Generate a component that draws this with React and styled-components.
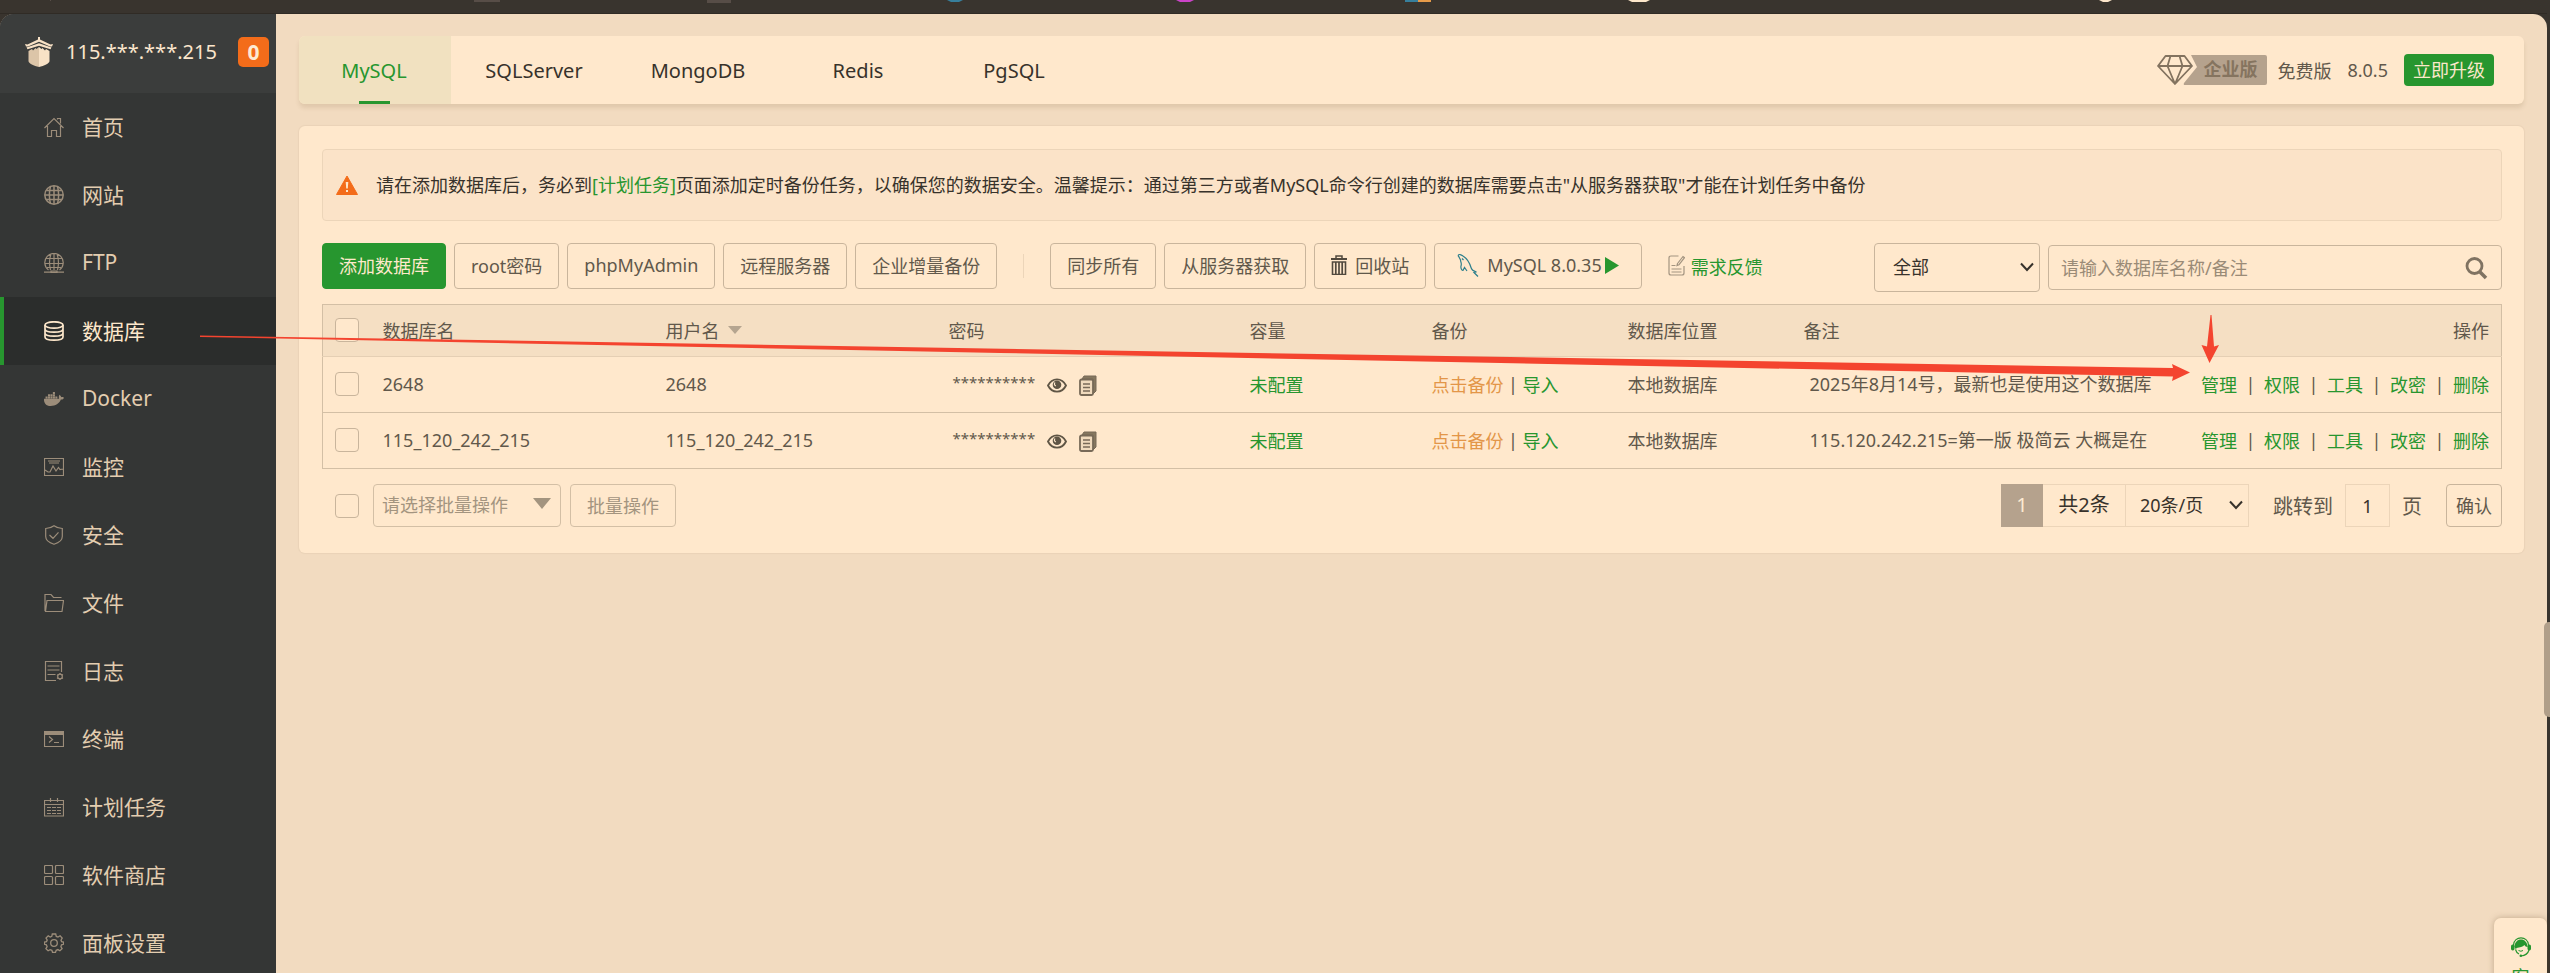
import React from "react";
import styled, { createGlobalStyle, css } from "styled-components";
import { FaDocker } from "react-icons/fa";

const c = {
  frame: "#39342e",
  page: "#f2dbc0",
  card: "#ffe8cc",
  line: "#d3bfa5",
  softLine: "#ecd5b9",
  control: "#c9b59c",
  text: "#61584b",
  ink: "#37322b",
  muted: "#a3947f",
  green: "#27962f",
  orange: "#e39648",
  alert: "#f36c1a",
  red: "#f4442f",
};

const Global = createGlobalStyle`
  *, *::before, *::after { box-sizing: border-box; }
  html, body { margin: 0; height: 100%; overflow: hidden; background: ${c.frame}; }
  body, button, input, select {
    font-family: "Noto Sans", "Noto Sans CJK SC", sans-serif;
    font-size: 18px;
    color: ${c.text};
  }
  a { text-decoration: none; color: ${c.green}; }
  svg { display: block; flex: none; }
`;

/* ---------- shell ---------- */
const Shell = styled.div`
  position: relative;
  display: flex;
  flex-direction: column;
  height: 100vh;
  padding-right: 3px;
  overflow: hidden;
`;
const TopStrip = styled.div`
  flex: none;
  height: 14px;
  border-bottom: 1px solid #302b25;
`;
const Body = styled.div`
  flex: 1;
  min-height: 0;
  display: flex;
  border-radius: 14px 14px 0 0;
  overflow: hidden;
  background: ${c.page};
`;
const Sidebar = styled.aside`
  flex: none;
  width: 276px;
  background: #343635;
  overflow: hidden;
`;
const SideHead = styled.div`
  height: 79px;
  padding: 0 7px 4px 25px;
  display: flex;
  align-items: center;
  gap: 13px;
  background: #3b3d3c;
  color: #fbe6cc;
  font-size: 20px;
`;
const Count = styled.span`
  margin-left: auto;
  width: 31px;
  height: 30px;
  border-radius: 5px;
  background: ${c.alert};
  color: #fdead2;
  font-size: 21px;
  font-weight: 700;
  line-height: 30px;
  text-align: center;
`;
const NavItem = styled.a`
  display: flex;
  align-items: center;
  gap: 18px;
  height: 68px;
  padding-left: 40px;
  border-left: 4px solid ${(p) => (p.$active ? c.green : "transparent")};
  background: ${(p) => (p.$active ? "#2b2d2c" : "transparent")};
  color: ${(p) => (p.$active ? "#fde7cb" : "#e3cdb0")};
  font-size: 21px;
  span { padding-bottom: 3px; }
  svg { color: ${(p) => (p.$active ? "#fde7cb" : "#9c8d7a")}; }
`;
const Main = styled.main`
  flex: 1;
  min-width: 0;
  display: flex;
  flex-direction: column;
  gap: 22px;
  padding: 22px 23px;
`;

/* ---------- tabs ---------- */
const TabBar = styled.header`
  display: flex;
  align-items: stretch;
  height: 68px;
  padding-right: 30px;
  border-radius: 6px;
  background: ${c.card};
  box-shadow: 0 4px 4px rgba(120, 90, 50, 0.14);
`;
const Tab = styled.button`
  position: relative;
  width: ${(p) => p.$width}px;
  padding: 0 2px 0 0;
  border: 0;
  border-radius: 6px 0 0 6px;
  background: ${(p) => (p.$active ? "#f1e1c0" : "transparent")};
  color: ${(p) => (p.$active ? c.green : c.ink)};
  font-size: 20px;
  ${(p) =>
    p.$active &&
    css`
      &::after {
        content: "";
        position: absolute;
        left: 50%;
        bottom: 0;
        width: 31px;
        height: 3px;
        margin-left: -16px;
        background: ${c.green};
      }
    `}
`;
const Version = styled.div`
  margin-left: auto;
  display: flex;
  align-items: center;
`;
const Edition = styled.div`
  position: relative;
  width: 110px;
  height: 30px;
  margin-right: 10px;
  padding-left: 46px;
  color: #85745f;
  font-weight: 700;
  line-height: 29px;
  svg { position: absolute; left: 0; top: 0; }
  span { position: relative; }
`;
const Plan = styled.span`
  margin-right: 16px;
`;
const Upgrade = styled.button`
  width: 90px;
  height: 32px;
  padding: 0;
  border: 0;
  border-radius: 4px;
  background: ${c.green};
  color: #fbe8cb;
  line-height: 30px;
`;

/* ---------- card ---------- */
const Card = styled.section`
  padding: 23px 22px 26px 23px;
  border-radius: 6px;
  background: ${c.card};
  box-shadow: 0 0 1px 1px rgba(120, 90, 50, 0.06);
`;
const Notice = styled.div`
  display: flex;
  align-items: center;
  gap: 18px;
  height: 72px;
  padding-left: 13px;
  border: 1px solid ${c.softLine};
  border-radius: 4px;
  background: #fbe3c8;
  color: ${c.ink};
  p { margin: 0; padding-bottom: 2px; }
`;
const Toolbar = styled.div`
  display: flex;
  align-items: flex-start;
  gap: 8px;
  height: 49px;
  margin-top: 22px;
`;
const Button = styled.button`
  display: flex;
  align-items: center;
  justify-content: center;
  gap: ${(p) => p.$gap || 8}px;
  height: ${(p) => p.$height || 46}px;
  padding: 0 ${(p) => p.$pad || 16}px 2px;
  border: 1px solid ${c.control};
  border-radius: 4px;
  background: transparent;
  white-space: nowrap;
  ${(p) =>
    p.$primary &&
    css`
      border-color: ${c.green};
      background: ${c.green};
      color: #fde9cb;
    `}
  ${(p) =>
    p.$muted &&
    css`
      border-color: ${c.line};
      color: ${c.muted};
    `}
`;
const Divider = styled.span`
  width: 1px;
  height: 24px;
  margin: 11px 18px 0;
  background: ${c.softLine};
`;
const Feedback = styled.a`
  display: flex;
  align-items: center;
  gap: 6px;
  height: 45px;
  margin-left: 18px;
`;
const SelectBox = styled.div`
  position: relative;
  width: ${(p) => p.$width}px;
  height: ${(p) => p.$height}px;
  select {
    width: 100%;
    height: 100%;
    padding: 0 ${(p) => p.$pad}px 2px;
    appearance: none;
    border: 1px solid ${(p) => p.$border || c.control};
    border-radius: ${(p) => (p.$square ? 0 : 4)}px;
    background: transparent;
    color: ${(p) => p.$color || c.ink};
  }
  svg {
    position: absolute;
    right: ${(p) => p.$inset || 5}px;
    top: 50%;
    margin-top: -8px;
    color: ${(p) => p.$color || c.ink};
    pointer-events: none;
  }
`;
const Filters = styled.div`
  margin-left: auto;
  display: flex;
  align-items: center;
  gap: 8px;
`;
const Search = styled.label`
  display: flex;
  align-items: center;
  width: 454px;
  height: 45px;
  padding: 0 13px 0 12px;
  border: 1px solid ${c.control};
  border-radius: 4px;
  input {
    flex: 1;
    min-width: 0;
    padding: 0;
    border: 0;
    outline: 0;
    background: transparent;
  }
  input::placeholder { color: #9a8b77; }
`;

/* ---------- table ---------- */
const Table = styled.table`
  width: 100%;
  margin-top: 12px;
  table-layout: fixed;
  border-collapse: collapse;
  border: 1px solid ${c.line};
  th, td {
    padding: 0 12px 2px;
    text-align: left;
    font-weight: 400;
    white-space: nowrap;
    overflow: hidden;
  }
  th { height: 52px; background: #f5dfc3; border-bottom: 1px solid #e5cfb4; }
  td { height: 56px; border-bottom: 1px solid ${c.line}; }
  th:last-child, td:last-child { text-align: right; }
`;
const Check = styled.input.attrs({ type: "checkbox" })`
  display: block;
  width: 24px;
  height: 24px;
  margin: 0;
  appearance: none;
  border: 1px solid ${c.control};
  border-radius: 4px;
  background: ${c.card};
`;
const Inline = styled.span`
  display: inline-flex;
  align-items: center;
  gap: ${(p) => p.$gap}px;
`;
const IconButton = styled.button`
  padding: 0;
  border: 0;
  background: none;
`;
const Password = styled.span`
  padding: 0 0 6px 4px;
  font-size: 15px;
`;
const Remark = styled.input`
  width: 100%;
  padding: 0 0 0 6px;
  border: 0;
  background: transparent;
`;
const Warn = styled.a`
  color: ${c.orange};
`;
const Bar = styled.span`
  width: 11px;
  text-align: center;
`;

/* ---------- footer ---------- */
const Footer = styled.div`
  display: flex;
  align-items: center;
  height: 43px;
  margin-top: 15px;
  padding-left: 13px;
`;
const Batch = styled.div`
  display: flex;
  align-items: center;
  gap: 9px;
  margin-left: 14px;
`;
const Pager = styled.div`
  margin-left: auto;
  display: flex;
  align-items: center;
  font-size: 20px;
`;
const PageNow = styled.span`
  width: 42px;
  height: 43px;
  background: #b5a28d;
  color: #fdead2;
  line-height: 41px;
  text-align: center;
`;
const Total = styled.span`
  width: 82px;
  height: 43px;
  border: 1px solid ${c.softLine};
  border-width: 1px 0;
  color: ${c.ink};
  line-height: 39px;
  text-align: center;
`;
const JumpLabel = styled.label`
  display: flex;
  align-items: center;
  gap: 12px;
  margin: 0 24px;
  input {
    width: 45px;
    height: 43px;
    padding: 0;
    border: 1px solid ${c.softLine};
    background: transparent;
    color: ${c.ink};
    text-align: center;
  }
`;

/* ---------- floating parts ---------- */
const Service = styled.button`
  position: absolute;
  right: 3px;
  top: 918px;
  width: 53px;
  height: 120px;
  padding: 19px 0 0;
  display: flex;
  flex-direction: column;
  align-items: center;
  gap: 8px;
  border: 0;
  border-radius: 7px 7px 0 0;
  background: ${c.card};
  box-shadow: 0 0 6px rgba(100, 75, 40, 0.35);
  color: ${c.green};
  span { width: 18px; line-height: 24px; }
`;
const Thumb = styled.div`
  position: absolute;
  right: 0;
  top: 622px;
  width: 6px;
  height: 95px;
  border-radius: 5px 0 0 5px;
  background: #b09e89;
`;
const Annotation = styled.svg`
  position: absolute;
  left: 0;
  top: 0;
  width: 100%;
  pointer-events: none;
`;

/* ---------- icons ---------- */
const Line = ({ size = 20, width = 1.2, children }) => (
  <svg width={size} height={size} viewBox="0 0 20 20" fill="none" stroke="currentColor" strokeWidth={width}>
    {children}
  </svg>
);
const icons = {
  home: (
    <Line>
      <path d="M.5 11 10 1.500 19.500 11M3.500 9v10.500h4v-6h5v6h4V9M13.500 2.500v-1h3v5" />
    </Line>
  ),
  site: (
    <Line width={1.5}>
      <circle cx="10" cy="10" r="9.200" />
      <path d="M10 1v18M1 10h18M2.500 5.500h15M2.500 14.500h15M6.500 1.500C5 6 5 14 6.500 18.500M13.500 1.500C15 6 15 14 13.500 18.500" />
    </Line>
  ),
  ftp: (
    <Line width={1.2}>
      <path d="M4.500 17A9.200 9.200 0 1 1 15.500 17M10 1v16M1 10.500h18M2.500 5.500h15M3 14.500h14M6.800 1.500C5.300 6 5.300 12 6.500 17M13.200 1.500C14.700 6 14.700 12 13.500 17M0 19.200h7M13 19.200h7M7 18.200h6v1.500H7z" />
    </Line>
  ),
  db: (
    <Line width={1.7}>
      <ellipse cx="10" cy="4" rx="9" ry="3.200" />
      <path d="M1 4v12c0 4.200 18 4.200 18 0V4M1 8c0 4.200 18 4.200 18 0M1 12c0 4.200 18 4.200 18 0" />
    </Line>
  ),
  docker: <FaDocker size={20} />,
  monitor: (
    <Line>
      <path d="M.5 1.500h19v17H.5zM4 4h12M5 6h10M1 13l3 2h2l3-6 3 5 2.500-3.500 1.500 2 3-.5" />
    </Line>
  ),
  safe: (
    <Line>
      <path d="M10 .8c2.500 2 5 2.600 8.300 2.700v8C18.300 15 14 18 10 19.300 6 18 1.700 15 1.700 11.500v-8C5 3.400 7.500 2.800 10 .8zM5.500 10l3.500 3.300 5.500-6" />
    </Line>
  ),
  folder: (
    <Line>
      <path d="M1 18V1.500h6l2.500 3h8M3 7.500h16.500l-1.500 11H1.500z" />
    </Line>
  ),
  log: (
    <Line>
      <path d="M12 19.500H1.500V.5h16V11M3.500 5h12M3.500 9h12M3.500 13.500h8" />
      <circle cx="16" cy="15.500" r="2.300" />
      <path d="M16 12v1M16 18v1M13 13.700l1 .6M18 16.800l1 .6M13 17.400l1-.6M18 14.200l1-.6" />
    </Line>
  ),
  term: (
    <Line>
      <path d="M.5 2.500h19v15H.5zM5 7.500l3.500 3-3.500 3M10 13.500h5" />
      <path d="M0 4h20" strokeWidth="4" />
    </Line>
  ),
  plan: (
    <Line>
      <path d="M.5 3.500h19v15.500H.5zM.5 7.500h19M6.500 1v4M13.500 1v4" />
      <path d="M3 10.500h14M3 13.500h14M3 16.500h14" strokeDasharray="4 1" />
    </Line>
  ),
  apps: (
    <Line>
      <rect x=".5" y=".5" width="8" height="8" rx="1" />
      <rect x="11.500" y=".5" width="8" height="8" rx="1" />
      <rect x=".5" y="11.500" width="8" height="8" rx="1" />
      <rect x="11.500" y="11.500" width="8" height="8" rx="1" />
    </Line>
  ),
  gear: (
    <Line width={1.3}>
      <circle cx="10" cy="10" r="3.300" />
      <path d="M8.300 1h3.400l.6 2.400 1.700.7 2.100-1.300 2.100 2.300-1.200 2.100.6 1.400 1.900.5v2.200l-2 .6-.6 1.700 1.200 2-2.200 2.200-2-1.200-1.700.7-.7 2H8.500l-.6-2-1.800-.7-2 1.200-2.200-2.200 1.200-2-.7-1.700-1.900-.6V9l2-.4.7-1.600L2 5l2.200-2.200 2 1.300 1.600-.7z" />
    </Line>
  ),
};

const Logo = () => (
  <svg width="28" height="30" viewBox="0 0 28 30" fill="#f8e2c6">
    <path d="M13 0h2v2.500l10.500 5 2.500-.5-1 2.500h-2L14 4.800 3 9.500H1L0 7l2.500.5L13 2.500z" />
    <path d="M1.500 10.500 14 6.200l12.500 4.300-1 1.800L14 8.800 2.500 12.300z" />
    <path d="M3.500 14 7 12l1 1.500L10.500 11l1 1L14 10v20C9 29 3.500 26.500 3.500 24z" fill="#dcc5a8" />
    <path d="M14 10l2.500 2 1-1 2.500 2.500L21 12l3.500 2v10c0 2.500-5.500 5-10.500 6z" />
  </svg>
);
const Diamond = () => (
  <svg width="110" height="30" viewBox="0 0 110 30">
    <path d="M34 0h74q2 0 2 2v26q0 2-2 2H28q-2 0-1-2L40 12z" fill="#b5a28d" />
    <path
      d="M8.500 1h19L35 11 18 29 1 11zM1 11h34M13.500 1l-3 10L18 29l7.500-18-3-10M8.500 1"
      fill="none"
      stroke="#83735f"
      strokeWidth="1.800"
      strokeLinejoin="round"
    />
  </svg>
);
const WarnIcon = () => (
  <svg width="22" height="20" viewBox="0 0 22 20">
    <path d="M11 1 21.500 19.500H.5z" fill={c.alert} stroke={c.alert} strokeLinejoin="round" />
    <path d="M9.700 7h2.600l-.5 6.500h-1.600zM10 15h2v2h-2z" fill="#fde7cb" />
  </svg>
);
const Trash = () => (
  <svg width="16" height="20" viewBox="0 0 16 20" fill="none" stroke="#51493e">
    <path d="M5 3V1h6v2" strokeWidth="1.500" />
    <path d="M0 4h16" strokeWidth="2" />
    <path d="M1.500 7v12.500h13V7z" strokeWidth="1.600" />
    <path d="M4.800 7v12M8 7v12M11.200 7v12" strokeWidth="1.700" />
  </svg>
);
const Dolphin = () => (
  <svg width="22" height="24" viewBox="0 0 22 24" fill="none" stroke="#2e7f8c" strokeWidth="1.200">
    <path d="M1 2.500C2 .8 4 1.500 6 3c4 2.500 6.500 6.500 8 11.500.6 2.500 2 3.500 5.500 4.500l-2.500.5 4 4M1 2.500c1 1 1.500 2.500 2.500 4.500 0 2 1.500 3 .5 6-.5 2.500 1 4.500 2 4.500l1.500-3L10 18" />
    <path d="M5 5.500l1.500 1.500" />
  </svg>
);
const Play = () => (
  <svg width="14" height="17" viewBox="0 0 14 17">
    <path d="M0 0 14 8.500 0 17z" fill={c.green} />
  </svg>
);
const Note = () => (
  <svg width="17" height="21" viewBox="0 0 17 21" fill="none" stroke="#a39480" strokeWidth="1.200">
    <path d="M10.500 1H3Q1 1 1 3v15q0 2 2 2h11q2 0 2-2v-7M3.500 10.500h4M3.500 14h10M3.500 17h10M9.500 8.500 15 1.500l1.500 1.200-5.500 7-2 .8z" />
  </svg>
);
const Eye = () => (
  <svg width="20" height="15" viewBox="0 0 20 15">
    <path d="M1 7.500C5-.7 15-.7 19 7.500 15 15.700 5 15.700 1 7.500z" fill="none" stroke="#5f5545" strokeWidth="1.800" />
    <circle cx="10" cy="6.800" r="4.300" fill="#5f5545" />
    <path d="M8 4.500q-1.500 2 .8 3.500" fill="none" stroke={c.card} strokeWidth="1.200" />
  </svg>
);
const Copy = () => (
  <svg width="18" height="21" viewBox="0 0 18 21">
    <path d="M5 1h12v15l-3 3V4H3z" fill="#85775f" stroke="#786a58" strokeLinejoin="round" />
    <rect x="1" y="4.500" width="13" height="15.500" rx="1.500" fill="#f0dabd" stroke="#786a58" strokeWidth="1.800" />
    <path d="M4 9h7M4 12.500h7M4 16h7" stroke="#786a58" strokeWidth="1.500" />
  </svg>
);
const Chevron = () => (
  <svg width="16" height="14" viewBox="0 0 16 14" fill="none" stroke="currentColor" strokeWidth="2">
    <path d="M2 3.500 8 10l6-6.500" />
  </svg>
);
const Triangle = ({ w = 18, h = 11, fill = "currentColor", label }) => (
  <svg width={w} height={h} viewBox="0 0 18 11" preserveAspectRatio="none" aria-label={label}>
    <path d="M0 0h18L9 11z" fill={fill} />
  </svg>
);
const Lens = () => (
  <svg width="24" height="24" viewBox="0 0 24 24" fill="none" stroke="#807362" strokeWidth="2.800">
    <circle cx="10.500" cy="10" r="7.500" />
    <path d="M15.500 15.500 22 22" strokeWidth="3.600" />
  </svg>
);
const Headset = () => (
  <svg width="20" height="20" viewBox="0 0 20 20" fill={c.green}>
    <path d="M2.500 8C3 -1.500 17 -1.500 17.500 8" fill="none" stroke={c.green} strokeWidth="1.100" />
    <path d="M3.500 10C3.500 0 16.500 0 16.500 10c-1.500 0-2.500-1-3-2-2 2-4.500 2.500-8 3l-.5 1.500z" />
    <rect x="0" y="7.500" width="3.500" height="6" rx="1.700" />
    <rect x="16.500" y="7.500" width="3.500" height="6" rx="1.700" />
    <path d="M4.500 12.500q1 3.500 3.500 4.500M18 13c-1 3.500-4 5.500-8 6" fill="none" stroke={c.green} strokeWidth="1.200" />
    <circle cx="9.800" cy="18.700" r="1.300" />
    <path d="M7.500 13.500q2.500 1.500 4.500 0" fill="none" stroke={c.green} />
  </svg>
);

/* ---------- data ---------- */
const nav = [
  ["home", "首页"],
  ["site", "网站"],
  ["ftp", "FTP"],
  ["db", "数据库"],
  ["docker", "Docker"],
  ["monitor", "监控"],
  ["safe", "安全"],
  ["folder", "文件"],
  ["log", "日志"],
  ["term", "终端"],
  ["plan", "计划任务"],
  ["apps", "软件商店"],
  ["gear", "面板设置"],
];
const tabs = [
  ["MySQL", 152],
  ["SQLServer", 168],
  ["MongoDB", 160],
  ["Redis", 160],
  ["PgSQL", 152],
];
const rows = [
  { name: "2648", remark: "2025年8月14号，最新也是使用这个数据库" },
  { name: "115_120_242_215", remark: "115.120.242.215=第一版 极简云 大概是在" },
];
const actions = ["管理", "权限", "工具", "改密", "删除"];
const columns = [48, 283, 283, 301, 182, 196, 176, null, 336];

export default function App() {
  return (
    <Shell>
      <Global />
      <TopStrip>
        <svg width="100%" height="3" viewBox="0 0 2547 3" preserveAspectRatio="none">
          <path d="M50 0h1v1h-1zM474 0h26v2h-26zM707 0h24v3h-24z" fill="#574d47" />
          <path d="M947 0h16l-4 2h-8zM1405 0h13v2h-13z" fill="#377f9c" />
          <path d="M1176 0h18l-4 2h-10z" fill="#cb43c8" />
          <path d="M1418 0h13v2h-13z" fill="#e59a49" />
          <path d="M1628 0h22l-4 2h-14zM2099 0h13l-4 2h-5z" fill="#fde7cb" />
        </svg>
      </TopStrip>
      <Body>
        <Sidebar>
          <SideHead>
            <Logo />
            <span>115.***.***.215</span>
            <Count>0</Count>
          </SideHead>
          <nav>
            {nav.map(([icon, label]) => (
              <NavItem key={label} href="#" $active={icon === "db"}>
                {icons[icon]}
                <span>{label}</span>
              </NavItem>
            ))}
          </nav>
        </Sidebar>
        <Main>
          <TabBar>
            {tabs.map(([label, width], i) => (
              <Tab key={label} $width={width} $active={i === 0}>
                {label}
              </Tab>
            ))}
            <Version>
              <Edition>
                <Diamond />
                <span>企业版</span>
              </Edition>
              <Plan>免费版</Plan>
              <Plan>8.0.5</Plan>
              <Upgrade>立即升级</Upgrade>
            </Version>
          </TabBar>
          <Card>
            <Notice>
              <WarnIcon />
              <p>
                请在添加数据库后，务必到<a href="#">[计划任务]</a>
                页面添加定时备份任务，以确保您的数据安全。温馨提示：通过第三方或者MySQL命令行创建的数据库需要点击"从服务器获取"才能在计划任务中备份
              </p>
            </Notice>
            <Toolbar>
              <Button $primary>添加数据库</Button>
              <Button>root密码</Button>
              <Button>phpMyAdmin</Button>
              <Button>远程服务器</Button>
              <Button>企业增量备份</Button>
              <Divider />
              <Button>同步所有</Button>
              <Button>从服务器获取</Button>
              <Button>
                <Trash />
                回收站
              </Button>
              <Button $pad={22}>
                <Dolphin />
                <Inline $gap={3}>
                  MySQL 8.0.35
                  <Play />
                </Inline>
              </Button>
              <Feedback href="#">
                <Note />
                需求反馈
              </Feedback>
              <Filters>
                <SelectBox $width={166} $height={49} $pad={18}>
                  <select aria-label="数据库位置">
                    <option>全部</option>
                  </select>
                  <Chevron />
                </SelectBox>
                <Search>
                  <input aria-label="搜索" placeholder="请输入数据库名称/备注" />
                  <Lens />
                </Search>
              </Filters>
            </Toolbar>
            <Table>
              <colgroup>
                {columns.map((w, i) => (
                  <col key={i} width={w || undefined} />
                ))}
              </colgroup>
              <thead>
                <tr>
                  <th>
                    <Check aria-label="全选" />
                  </th>
                  <th>数据库名</th>
                  <th>
                    <Inline $gap={8}>
                      用户名
                      <Triangle w={14} h={8} fill="#b5a590" label="排序" />
                    </Inline>
                  </th>
                  <th>密码</th>
                  <th>容量</th>
                  <th>备份</th>
                  <th>数据库位置</th>
                  <th>备注</th>
                  <th>操作</th>
                </tr>
              </thead>
              <tbody>
                {rows.map((r) => (
                  <tr key={r.name}>
                    <td>
                      <Check aria-label={r.name} />
                    </td>
                    <td>{r.name}</td>
                    <td>{r.name}</td>
                    <td>
                      <Inline $gap={12}>
                        <Password>**********</Password>
                        <IconButton aria-label="显示密码">
                          <Eye />
                        </IconButton>
                        <IconButton aria-label="复制密码">
                          <Copy />
                        </IconButton>
                      </Inline>
                    </td>
                    <td>
                      <a href="#">未配置</a>
                    </td>
                    <td>
                      <Inline $gap={4}>
                        <Warn href="#">点击备份</Warn>
                        <Bar>|</Bar>
                        <a href="#">导入</a>
                      </Inline>
                    </td>
                    <td>本地数据库</td>
                    <td>
                      <Remark aria-label="备注" defaultValue={r.remark} />
                    </td>
                    <td>
                      <Inline $gap={8}>
                        {actions.map((a, i) => (
                          <React.Fragment key={a}>
                            {i > 0 && <Bar>|</Bar>}
                            <a href="#">{a}</a>
                          </React.Fragment>
                        ))}
                      </Inline>
                    </td>
                  </tr>
                ))}
              </tbody>
            </Table>
            <Footer>
              <Check aria-label="全选" />
              <Batch>
                <SelectBox $width={188} $height={43} $pad={8} $inset={10} $border={c.line} $color={c.muted}>
                  <select aria-label="批量操作">
                    <option>请选择批量操作</option>
                  </select>
                  <Triangle />
                </SelectBox>
                <Button $muted $height={43}>
                  批量操作
                </Button>
              </Batch>
              <Pager>
                <PageNow>1</PageNow>
                <Total>共2条</Total>
                <SelectBox $width={124} $height={43} $pad={14} $border={c.softLine} $square>
                  <select aria-label="每页条数">
                    <option>20条/页</option>
                  </select>
                  <Chevron />
                </SelectBox>
                <JumpLabel>
                  跳转到
                  <input defaultValue="1" />页
                </JumpLabel>
                <Button $height={43} $pad={9}>
                  确认
                </Button>
              </Pager>
            </Footer>
          </Card>
        </Main>
      </Body>
      <Service>
        <Headset />
        <span>客服</span>
      </Service>
      <Thumb />
      <Annotation viewBox="0 0 2550 973" preserveAspectRatio="xMinYMin meet" fill={c.red}>
        <path d="M200 335.500 2173 368l-1-4 18 8.500-18 8.500 1-4.500L1000 353 200 337z" />
        <path d="M2210.500 315h1l2.500 31.500 5-1.500-9.500 18-8-18 5.500 1.500z" />
      </Annotation>
    </Shell>
  );
}
